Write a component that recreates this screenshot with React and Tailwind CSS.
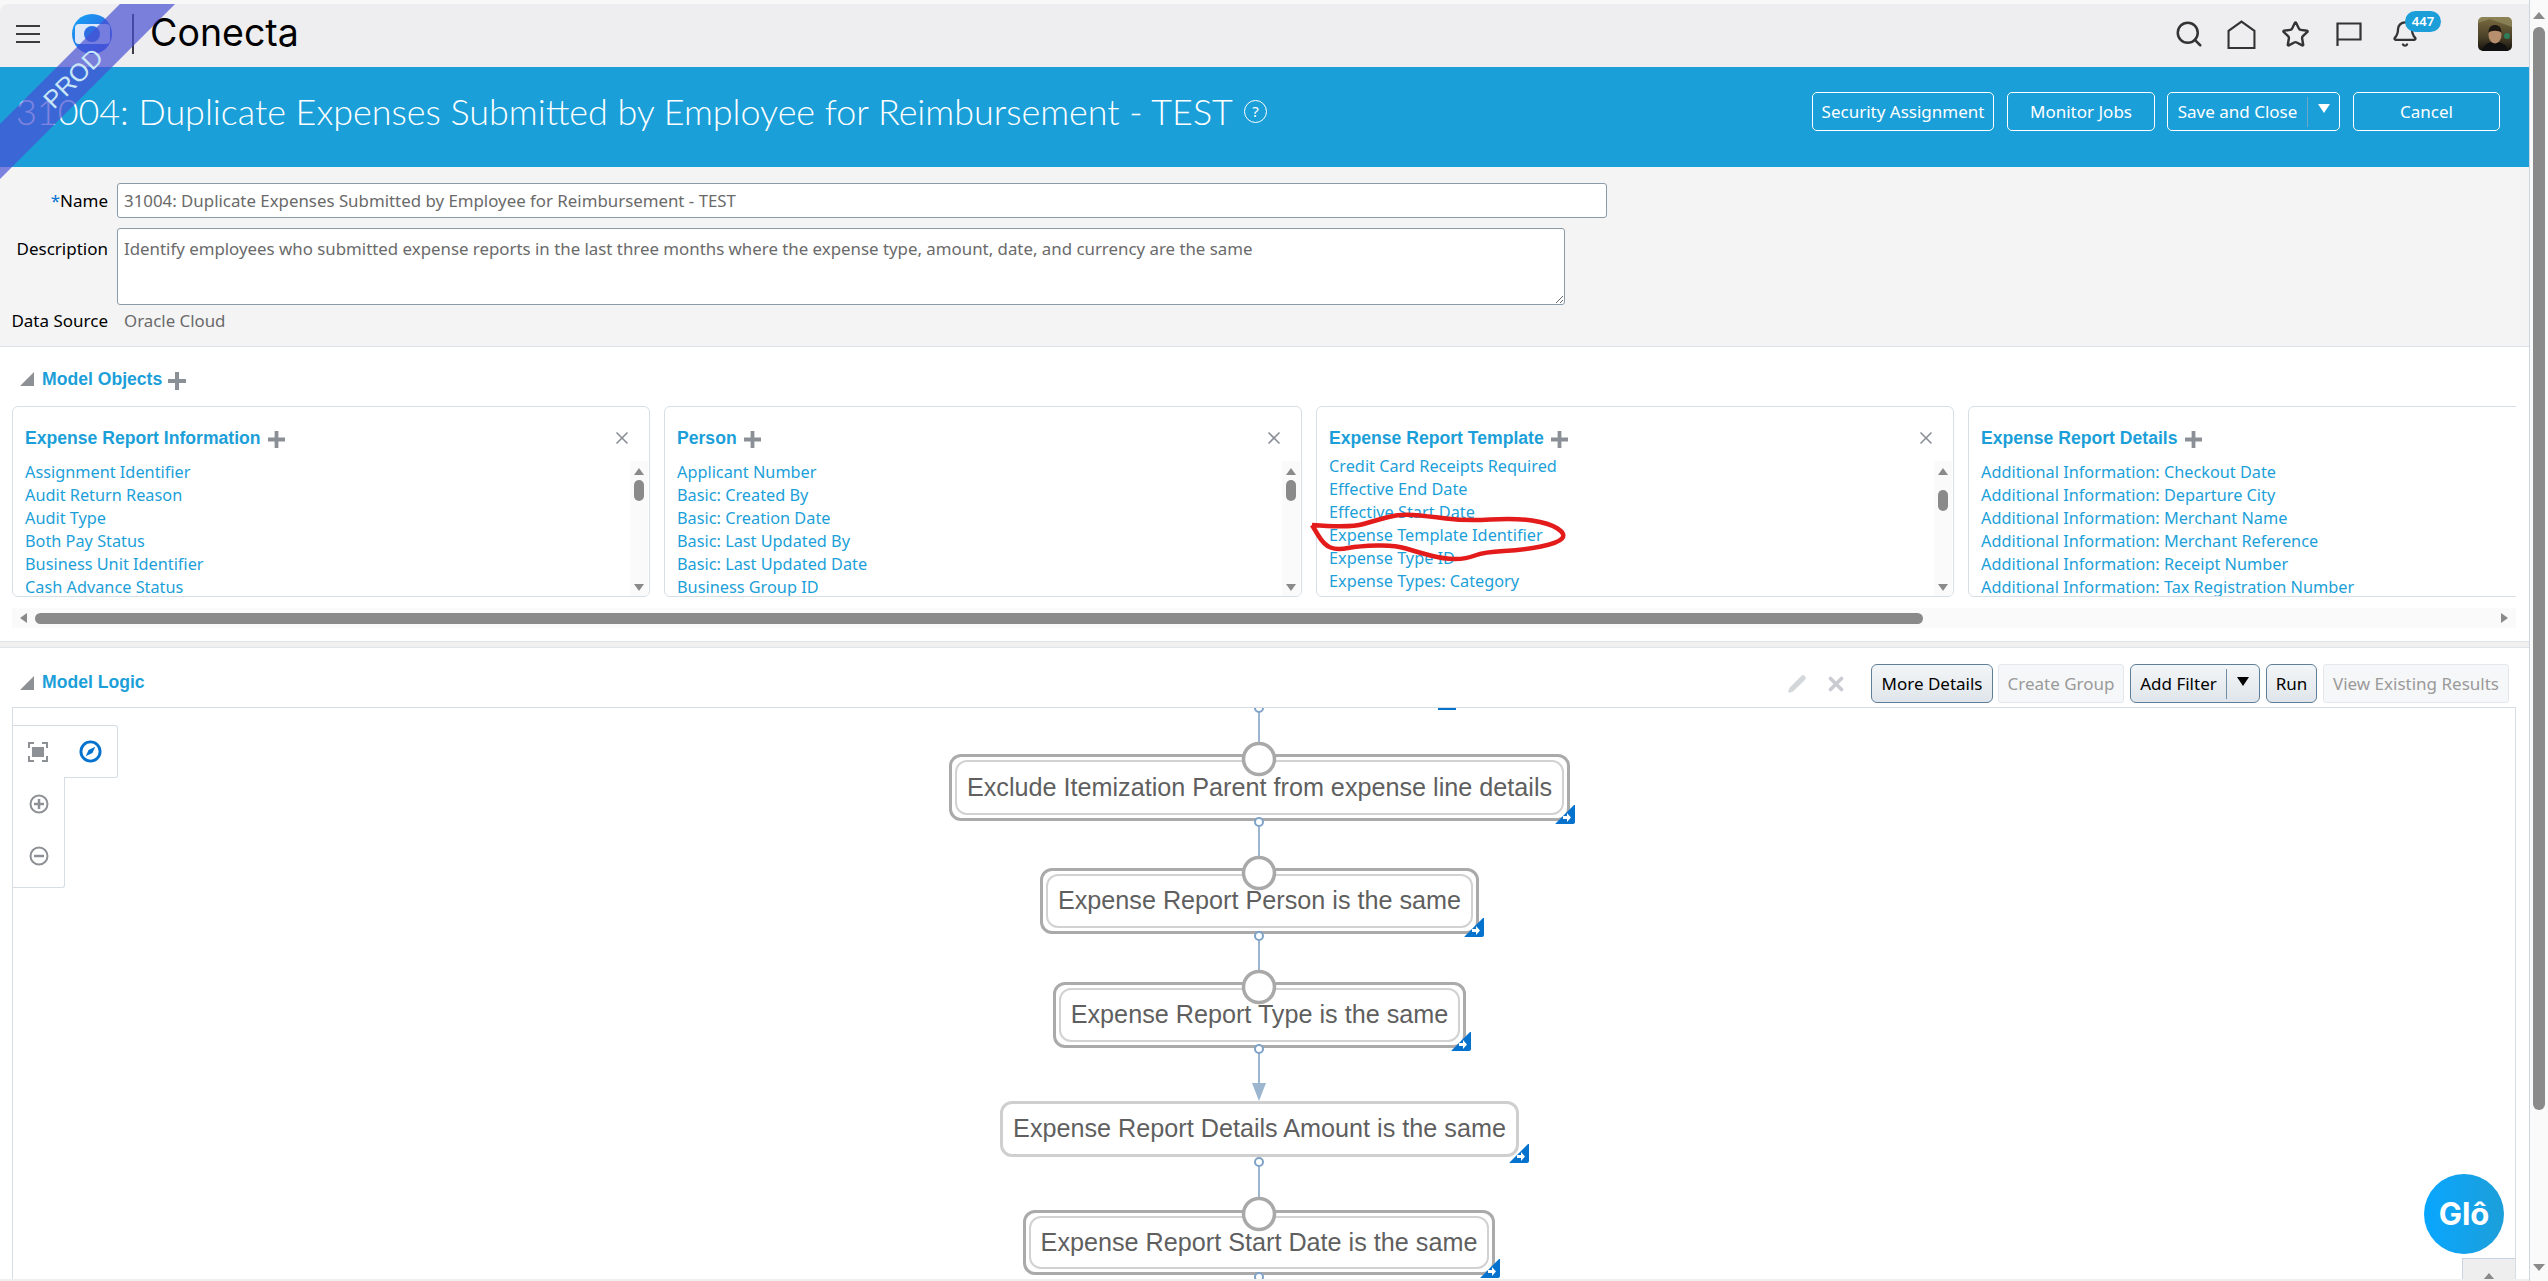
import { X, Pencil, Star, Search, Bell } from 'lucide-react';

const listOne = ['Assignment Identifier', 'Audit Return Reason', 'Audit Type', 'Both Pay Status', 'Business Unit Identifier', 'Cash Advance Status'];
const listTwo = ['Applicant Number', 'Basic: Created By', 'Basic: Creation Date', 'Basic: Last Updated By', 'Basic: Last Updated Date', 'Business Group ID'];
const listThree = ['Credit Card Receipts Required', 'Effective End Date', 'Effective Start Date', 'Expense Template Identifier', 'Expense Type ID', 'Expense Types: Category'];
const listFour = ['Additional Information: Checkout Date', 'Additional Information: Departure City', 'Additional Information: Merchant Name', 'Additional Information: Merchant Reference', 'Additional Information: Receipt Number', 'Additional Information: Tax Registration Number'];

const scribble = [[1312, 525], [1350, 528], [1377, 520], [1400, 514], [1426, 516], [1466, 521], [1515, 518], [1549, 523], [1566, 534], [1558, 543], [1524, 550], [1484, 552], [1466, 559], [1444, 559], [1417, 552], [1395, 545], [1359, 546], [1337, 550], [1324, 545], [1312, 525]];

// smooth the hand drawn ring through the midpoints
const scribblePath = () => {
  let d = `M${scribble[0][0]} ${scribble[0][1]}`;
  for (let i = 1; i < scribble.length - 1; i++) {
    const [x, y] = scribble[i];
    const [nx, ny] = scribble[i + 1];
    d += ` Q${x} ${y} ${(x + nx) / 2} ${(y + ny) / 2}`;
  }
  const last = scribble[scribble.length - 1];
  return `${d} L${last[0]} ${last[1]}`;
};

const nodes = [
  { id: 1, label: 'Exclude Itemization Parent from expense line details', box: 'left-[936px] top-[46px] w-[621px] h-[67px]', group: true },
  { id: 2, label: 'Expense Report Person is the same', box: 'left-[1027px] top-[160px] w-[439px] h-[66px]', group: true },
  { id: 3, label: 'Expense Report Type is the same', box: 'left-[1040px] top-[274px] w-[413px] h-[66px]', group: true },
  { id: 4, label: 'Expense Report Details Amount is the same', box: 'left-[987px] top-[393px] w-[519px] h-[56px]', group: false },
  { id: 5, label: 'Expense Report Start Date is the same', box: 'left-[1010px] top-[502px] w-[472px] h-[65px]', group: true },
];

function PlusIcon({ className }) {
  return (
    <svg viewBox="0 0 18 18" className={className}>
      <path d="M7 0h4v7h7v4h-7v7H7v-7H0V7h7z" fill="#8b9096" />
    </svg>
  );
}

function Triangle() {
  return (
    <svg viewBox="0 0 14 14" className="w-[14px] h-[14px] shrink-0">
      <path d="M14 0v14H0z" fill="#8d9195" />
    </svg>
  );
}

function ObjectCard({ title, items, thumb, scrolled, noScroll }) {
  return (
    <div className="w-[638px] h-[191px] shrink-0 bg-white border border-[#d6dee6] rounded-md overflow-hidden flex flex-col">
      <div className="h-[54px] shrink-0 flex items-center pl-[12px] pr-[17px] pt-[8px]">
        <span className="font-['Liberation_Sans',sans-serif] font-bold text-[17.6px] text-[#1c9fd9]">{title}</span>
        <PlusIcon className="w-[17px] h-[17px] ml-[7px] mt-[2px]" />
        <X className="ml-auto w-[20px] h-[20px] text-[#8b9096]" strokeWidth={2} />
      </div>
      <div className="flex flex-1 min-h-0">
        <div className={`flex-1 pl-[12px] overflow-hidden ${scrolled ? '-mt-[6px]' : ''}`}>
          {items.map((item) => (
            <div key={item} className="h-[23px] leading-[23px] text-[16.3px] text-[#1c9fd9] whitespace-nowrap">{item}</div>
          ))}
        </div>
        {!noScroll && (
          <div className="w-[18px] shrink-0 mr-[1px] bg-[#fafafa] flex flex-col items-center pt-[7px] pb-[5px]">
            <div className="w-0 h-0 border-x-[5px] border-x-transparent border-b-[7px] border-b-[#8a8a8a]" />
            <div className={`w-[10px] h-[21px] rounded-full bg-[#8a8a8a] ${thumb}`} />
            <div className="mt-auto w-0 h-0 border-x-[5px] border-x-transparent border-t-[7px] border-t-[#8a8a8a]" />
          </div>
        )}
      </div>
    </div>
  );
}

function NodeBadge({ className }) {
  return (
    <svg viewBox="0 0 20 20" className={`absolute w-[20px] h-[20px] ${className}`}>
      <path d="M19 1 1 19a0.5 0.5 0 0 0 0 1h17a2 2 0 0 0 2-2V1z" fill="#0572ce" />
      <path d="M8 12h4V9l4 4.5-4 4.5v-3H8z" fill="#fff" />
    </svg>
  );
}

function DiagramNode({ node }) {
  return (
    <div className={`absolute ${node.box} rounded-xl bg-white ${node.group ? 'border-[3px] border-[#aaaaaa] rounded-md p-[3px]' : 'border-[3px] border-[#cfcfcf]'}`}>
      <div className={`h-full flex items-center justify-center whitespace-nowrap font-['Liberation_Sans',sans-serif] text-[25.2px] text-[#5f5f5f] ${node.group ? 'border-2 border-[#d2d2d2] rounded-xl' : ''}`}>
        {node.label}
      </div>
      <NodeBadge className={node.group ? '-right-[8px] -bottom-[6px]' : '-right-[13px] -bottom-[9px]'} />
    </div>
  );
}

function Connectors() {
  const lines = [[4, 36], [118, 150], [232, 264], [345, 376], [458, 491]];
  const dots = [0, 114, 228, 341, 454, 569];
  const rings = [51, 165, 279, 506];
  return (
    <svg className="absolute left-0 top-0 w-[2502px] h-[572px]" viewBox="0 0 2502 572">
      {lines.map(([a, b]) => (
        <line key={a} x1="1246" x2="1246" y1={a} y2={b} stroke="#9db6d0" strokeWidth="2" />
      ))}
      <path d="M1239 375h14l-7 18z" fill="#9db6d0" />
      {dots.map((y) => (
        <circle key={y} cx="1246" cy={y} r="4" fill="#fff" stroke="#7fa3c7" strokeWidth="2" />
      ))}
      {rings.map((y) => (
        <circle key={y} cx="1246" cy={y} r="15.5" fill="#fff" stroke="#a9a9a9" strokeWidth="3.5" />
      ))}
    </svg>
  );
}

function HeaderButton({ children, className }) {
  return (
    <button className={`h-[39px] border border-white rounded-[5px] text-white text-[17px] flex items-center justify-center ${className}`}>
      {children}
    </button>
  );
}

export default function App() {
  return (
    <div className="relative w-[2548px] h-[1281px] overflow-hidden flex bg-[#f8f8f8] font-['Noto_Sans',sans-serif]">
      <div className="w-[2529px] shrink-0 flex flex-col pt-[4px]">
        {/* top bar */}
        <div className="h-[63px] shrink-0 bg-[#eeeef0] rounded-tl-lg flex items-center pl-[16px] pr-[17px] pb-[3px]">
          <div className="w-[24px] flex flex-col gap-[6px]">
            <div className="h-[2px] bg-[#3a3a3a]" />
            <div className="h-[2px] bg-[#3a3a3a]" />
            <div className="h-[2px] bg-[#3a3a3a]" />
          </div>
          <svg viewBox="0 0 42 40" className="w-[42px] h-[40px] ml-[31px]">
            <defs>
              <linearGradient id="logoBlue" x1="0" x2="1" y1="0" y2="1">
                <stop offset="0" stopColor="#12a5f5" />
                <stop offset="1" stopColor="#3c50e0" />
              </linearGradient>
            </defs>
            <circle cx="21" cy="20" r="20" fill="url(#logoBlue)" />
            <rect x="4" y="10" width="35" height="20" rx="4" fill="#dce8fa" />
            <circle cx="21" cy="20" r="8" fill="#2d6fe2" />
          </svg>
          <div className="w-[2px] h-[40px] bg-[#3b3b46] ml-[19px]" />
          <div className="ml-[16px] -mt-[2px] font-['Inter',sans-serif] text-[37.5px] leading-none text-black">Conecta</div>

          <div className="ml-auto flex items-center">
            <Search className="w-[30px] h-[30px] text-[#333]" strokeWidth={2} />
            <svg viewBox="0 0 28 28" className="w-[29px] h-[29px] ml-[23px]">
              <path d="M1.5 27V10.5L14 1.5l12.5 9V27z" fill="none" stroke="#333" strokeWidth="2" />
            </svg>
            <Star className="w-[29px] h-[29px] ml-[25px] text-[#333]" strokeWidth={2} />
            <svg viewBox="0 0 26 24" className="w-[26px] h-[24px] ml-[26px]">
              <path d="M1.5 24V1.5h23v16h-23" fill="none" stroke="#333" strokeWidth="2.2" />
            </svg>
            <div className="relative ml-[29px]">
              <Bell className="w-[28px] h-[28px] text-[#333]" strokeWidth={2} />
              <span className="absolute left-[14px] -top-[9px] w-[36px] h-[21px] rounded-full bg-[#1c9fd9] text-white text-[13px] font-semibold flex items-center justify-center">447</span>
            </div>
            <svg viewBox="0 0 34 34" className="w-[34px] h-[34px] ml-[59px] rounded-[5px]">
              <defs>
                <linearGradient id="cave" x1="0" x2="0" y1="0" y2="1">
                  <stop offset="0" stopColor="#7a6c40" />
                  <stop offset="0.6" stopColor="#4a4028" />
                  <stop offset="1" stopColor="#14110c" />
                </linearGradient>
              </defs>
              <rect width="34" height="34" fill="url(#cave)" />
              <path d="M0 6 12 2l22 8V0H0z" fill="#9a9266" opacity="0.6" />
              <circle cx="29" cy="19" r="3" fill="#2f7d5a" />
              <path d="M4 34c1-7 7-9 13-9s12 2 13 9z" fill="#101010" />
              <ellipse cx="17" cy="18" rx="6.5" ry="8.5" fill="#b78f6c" />
              <path d="M10.5 16c0-6 3-8 6.5-8s6.5 2 6.5 8c-2-3-11-3-13 0z" fill="#1d1712" />
            </svg>
          </div>
        </div>

        {/* title bar */}
        <div className="h-[100px] shrink-0 bg-[#1a9fd9] flex items-center pl-[16px] pr-[29px] pb-[11px]">
          <h1 className="font-['Lato',sans-serif] text-[35.9px] font-light text-white whitespace-nowrap">31004: Duplicate Expenses Submitted by Employee for Reimbursement - TEST</h1>
          <span className="ml-[11px] w-[23px] h-[23px] rounded-full border border-white text-white text-[15px] leading-none flex items-center justify-center">?</span>
          <div className="ml-auto flex items-center">
            <HeaderButton className="w-[182px]">Security Assignment</HeaderButton>
            <HeaderButton className="w-[148px] ml-[13px]">Monitor Jobs</HeaderButton>
            <button className="w-[173px] h-[39px] ml-[12px] border border-white rounded-[5px] text-white text-[17px] flex items-center">
              <span className="w-[139px] text-center">Save and Close</span>
              <span className="w-px h-[30px] bg-[#6fa8c4]" />
              <span className="flex-1 flex justify-center -mt-[6px]">
                <span className="w-0 h-0 border-x-[6px] border-x-transparent border-t-[9px] border-t-white" />
              </span>
            </button>
            <HeaderButton className="w-[147px] ml-[13px]">Cancel</HeaderButton>
          </div>
        </div>

        {/* form */}
        <div className="h-[180px] shrink-0 bg-[#f4f4f5] border-b border-[#dfe4ea] pt-[16px]">
          <div className="flex items-center">
            <label className="w-[108px] text-right text-[17px] text-black"><span className="text-[#0572ce]">*</span>Name</label>
            <input readOnly value="31004: Duplicate Expenses Submitted by Employee for Reimbursement - TEST" className="ml-[9px] w-[1490px] h-[35px] bg-white border border-[#8b9aa8] rounded-[3px] px-[6px] text-[16.85px] text-[#6a6a6a]" />
          </div>
          <div className="flex mt-[10px]">
            <label className="w-[108px] text-right text-[17px] text-black pt-[8px]">Description</label>
            <textarea readOnly defaultValue="Identify employees who submitted expense reports in the last three months where the expense type, amount, date, and currency are the same" className="ml-[9px] w-[1448px] h-[77px] bg-white border border-[#8b9aa8] rounded-[3px] px-[6px] pt-[8px] text-[16.85px] text-[#6a6a6a] leading-[24px]" />
          </div>
          <div className="flex mt-[3px] items-center">
            <label className="w-[108px] text-right text-[17px] text-black">Data Source</label>
            <span className="ml-[16px] text-[16.85px] text-[#6a6a6a]">Oracle Cloud</span>
          </div>
        </div>

        {/* model objects */}
        <div className="h-[295px] shrink-0 bg-white border-b border-[#dfe4ea] pl-[12px] pr-[13px] pt-[21px]">
          <div className="h-[22px] flex items-center pl-[8px]">
            <Triangle />
            <span className="ml-[8px] font-['Liberation_Sans',sans-serif] font-bold text-[17.6px] text-[#1c9fd9]">Model Objects</span>
            <PlusIcon className="w-[18px] h-[18px] ml-[6px] mt-[3px]" />
          </div>
          <div className="mt-[16px] flex gap-[14px] overflow-hidden">
            <ObjectCard title="Expense Report Information" items={listOne} thumb="mt-[5px]" />
            <ObjectCard title="Person" items={listTwo} thumb="mt-[5px]" />
            <ObjectCard title="Expense Report Template" items={listThree} scrolled thumb="mt-[15px]" />
            <ObjectCard title="Expense Report Details" items={listFour} noScroll />
          </div>
          <div className="mt-[11px] h-[20px] bg-[#fafafa] flex items-center px-[8px]">
            <div className="w-0 h-0 border-y-[5px] border-y-transparent border-r-[7px] border-r-[#8a8a8a]" />
            <div className="ml-[8px] w-[1888px] h-[11px] rounded-full bg-[#8a8a8a]" />
            <div className="ml-auto w-0 h-0 border-y-[5px] border-y-transparent border-l-[7px] border-l-[#8a8a8a]" />
          </div>
        </div>

        <div className="h-[6px] shrink-0 bg-[#f0f0f1] border-b border-[#dfe4ea]" />

        {/* model logic */}
        <div className="flex-1 min-h-0 bg-white flex flex-col pl-[12px] pr-[13px]">
          <div className="h-[59px] shrink-0 flex items-center pl-[8px] pt-[10px]">
            <Triangle />
            <span className="ml-[8px] font-['Liberation_Sans',sans-serif] font-bold text-[17.6px] text-[#1c9fd9]">Model Logic</span>
            <div className="ml-auto flex items-center pr-[7px] pt-[2px]">
              <Pencil className="w-[20px] h-[20px] text-[#d4d7da]" fill="#d4d7da" strokeWidth={1} />
              <X className="w-[22px] h-[22px] ml-[18px] text-[#c8ccd0]" strokeWidth={4} />
              <button className="ml-[24px] w-[122px] h-[39px] rounded-[6px] border border-[#5f7f99] bg-gradient-to-b from-[#f3f6f8] to-[#dfe5ea] text-[17px] text-black">More Details</button>
              <button className="ml-[5px] w-[126px] h-[39px] rounded-[3px] border border-[#e4e8ec] bg-[#f6f7f8] text-[17px] text-[#9a9a9a]">Create Group</button>
              <button className="ml-[6px] w-[130px] h-[39px] rounded-[6px] border border-[#5f7f99] bg-gradient-to-b from-[#f3f6f8] to-[#dfe5ea] text-[17px] text-black flex items-center">
                <span className="w-[95px] text-center">Add Filter</span>
                <span className="w-px h-[30px] bg-[#6f8da5]" />
                <span className="flex-1 flex justify-center -mt-[4px]">
                  <span className="w-0 h-0 border-x-[6px] border-x-transparent border-t-[9px] border-t-black" />
                </span>
              </button>
              <button className="ml-[6px] w-[51px] h-[39px] rounded-[6px] border border-[#5f7f99] bg-gradient-to-b from-[#f3f6f8] to-[#dfe5ea] text-[17px] text-black">Run</button>
              <button className="ml-[6px] w-[186px] h-[39px] rounded-[3px] border border-[#e4e8ec] bg-[#f6f7f8] text-[17px] text-[#9a9a9a]">View Existing Results</button>
            </div>
          </div>
          <div className="relative flex-1 min-h-0 border-l border-t border-r border-[#d6dde5] overflow-hidden">
            <div className="absolute left-[1425px] top-0 w-[18px] h-[2px] bg-[#0572ce]" />
            {nodes.map((node) => (
              <DiagramNode key={node.id} node={node} />
            ))}
            <Connectors />

            {/* zoom controls */}
            <div className="absolute left-0 top-[17px]">
              <div className="w-[105px] h-[53px] bg-white border-t border-r border-b border-[#d6dde5] rounded-br-[3px] rounded-tr-[3px] flex items-center">
                <svg viewBox="0 0 20 20" className="w-[20px] h-[20px] ml-[15px]">
                  <path d="M1 6V1h5M14 1h5v5M19 14v5h-5M6 19H1v-5" fill="none" stroke="#8d9195" strokeWidth="2" />
                  <rect x="4" y="5" width="12" height="10" fill="#8d9195" />
                </svg>
                <svg viewBox="0 0 24 24" className="w-[23px] h-[23px] ml-[31px]">
                  <circle cx="12" cy="12" r="10" fill="none" stroke="#0572ce" strokeWidth="3" />
                  <path d="m17 7-7 3.5L7 17l7-3.5z" fill="#0572ce" />
                </svg>
              </div>
              <div className="relative w-[52px] h-[111px] -mt-px bg-white border-r border-b border-[#d6dde5] rounded-br-[3px] flex flex-col items-center pt-[17px] gap-[32px]">
                <svg viewBox="0 0 20 20" className="w-[20px] h-[20px]">
                  <circle cx="10" cy="10" r="8.5" fill="none" stroke="#8d9195" strokeWidth="2" />
                  <path d="M5 10h10M10 5v10" stroke="#8d9195" strokeWidth="2.5" />
                </svg>
                <svg viewBox="0 0 20 20" className="w-[20px] h-[20px]">
                  <circle cx="10" cy="10" r="8.5" fill="none" stroke="#8d9195" strokeWidth="2" />
                  <path d="M5 10h10" stroke="#8d9195" strokeWidth="2.5" />
                </svg>
              </div>
            </div>

            {/* overview */}
            <div className="absolute right-0 bottom-0 w-[53px] h-[21px] bg-[#eeeeee] border-l border-t border-[#c8d4e2] flex justify-center pt-[14px]">
              <div className="w-0 h-0 border-x-[6px] border-x-transparent border-b-[7px] border-b-[#8a8a8a]" />
            </div>
          </div>
        </div>
        <div className="h-[2px] shrink-0 bg-[#efefef]" />
      </div>

      {/* page scrollbar */}
      <div className="relative flex-1 bg-[#fafafa] border-l border-[#cdd6e0] flex flex-col items-center pt-[12px] pb-[10px]">
        <div className="w-0 h-0 border-x-[6px] border-x-transparent border-b-[7px] border-b-[#8a8a8a]" />
        <div className="mt-[8px] w-[12px] h-[1083px] rounded-full bg-[#8a8a8a]" />
        <div className="mt-auto w-0 h-0 border-x-[6px] border-x-transparent border-t-[7px] border-t-[#8a8a8a]" />
      </div>

      {/* PROD ribbon */}
      <div className="absolute left-0 top-[4px] w-[200px] h-[200px] overflow-hidden pointer-events-none">
        <div className="absolute -left-[54px] top-[52px] w-[260px] h-[39px] -rotate-45 bg-[#4950d3]/70 flex items-center justify-center pr-[8px] font-['Liberation_Sans',sans-serif] text-[25px] text-[#c9e6f7]">PROD</div>
      </div>

      {/* hand drawn mark on the screenshot */}
      <svg className="absolute left-0 top-0 w-[2548px] h-[1281px] pointer-events-none" viewBox="0 0 2548 1281">
        <path d={scribblePath()} fill="none" stroke="#e31b1b" strokeWidth="4.5" strokeLinejoin="round" />
      </svg>

      {/* chat button */}
      <div className="absolute left-[2424px] top-[1174px] w-[80px] h-[80px] rounded-full bg-gradient-to-r from-[#07a6ff] to-[#1c9fd9] flex items-center justify-center font-['Inter',sans-serif] font-bold text-[31px] text-white">Glô</div>
    </div>
  );
}
